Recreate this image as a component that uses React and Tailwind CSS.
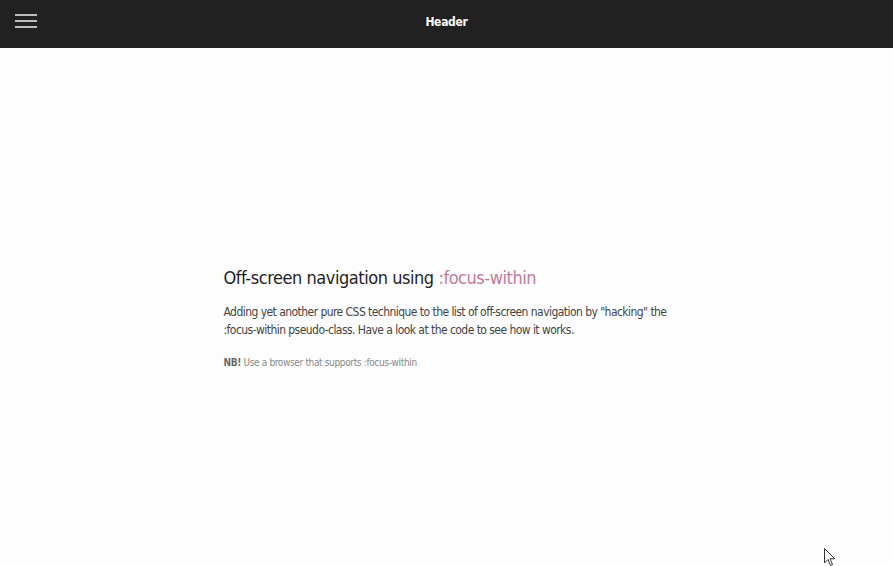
import React from "react";

const font = { fontFamily: '"DejaVu Sans", sans-serif' };

const App = () => {
  return (
    <div className="w-full min-h-[566px] bg-[#fdfdfd] flex flex-col relative font-stretch-condensed" style={font}>
      <header className="h-12 bg-[#212121] flex items-start relative">
        <button className="ml-[15px] mt-[14px] flex flex-col gap-[4px] w-[22px]">
          <span className="block h-[2px] w-[22px] bg-[#bdbdbd]"></span>
          <span className="block h-[2px] w-[22px] bg-[#bdbdbd]"></span>
          <span className="block h-[2px] w-[22px] bg-[#bdbdbd]"></span>
        </button>
        <h1 className="absolute left-0 right-0 top-[14px] text-center text-[12px] leading-4 font-bold tracking-[-0.3px] text-white pointer-events-none">Header</h1>
      </header>

      <main className="flex-1 flex justify-center pt-[218px]">
        <div className="w-[450px] pl-[2px]">
          <h2 className="text-[18px] leading-6 tracking-[-0.45px] text-[#1f1f1f]">
            Off-screen navigation using <span className="text-[#c07b9b]">:focus-within</span>
          </h2>
          <p className="mt-[13px] text-[12px] leading-[18px] tracking-[-0.55px] text-[#444]">
            Adding yet another pure CSS technique to the list of off-screen navigation by "hacking" the :focus-within pseudo-class. Have a look at the code to see how it works.
          </p>
          <p className="mt-[16px] text-[10px] tracking-[-0.35px] text-[#888]">
            <strong className="text-[#666]">NB!</strong> Use a browser that supports :focus-within
          </p>
        </div>
      </main>

      {/* mouse pointer */}
      <svg className="absolute left-[824px] top-[548px]" width="12" height="19" viewBox="0 0 12 19">
        <path d="M0.5 0.5 L0.5 15 L4 11.5 L6.5 17.5 L8.5 16.5 L6 10.8 L10.8 10.8 Z" fill="#fff" stroke="#333" strokeWidth="1" />
      </svg>
    </div>
  );
};

export default App;
